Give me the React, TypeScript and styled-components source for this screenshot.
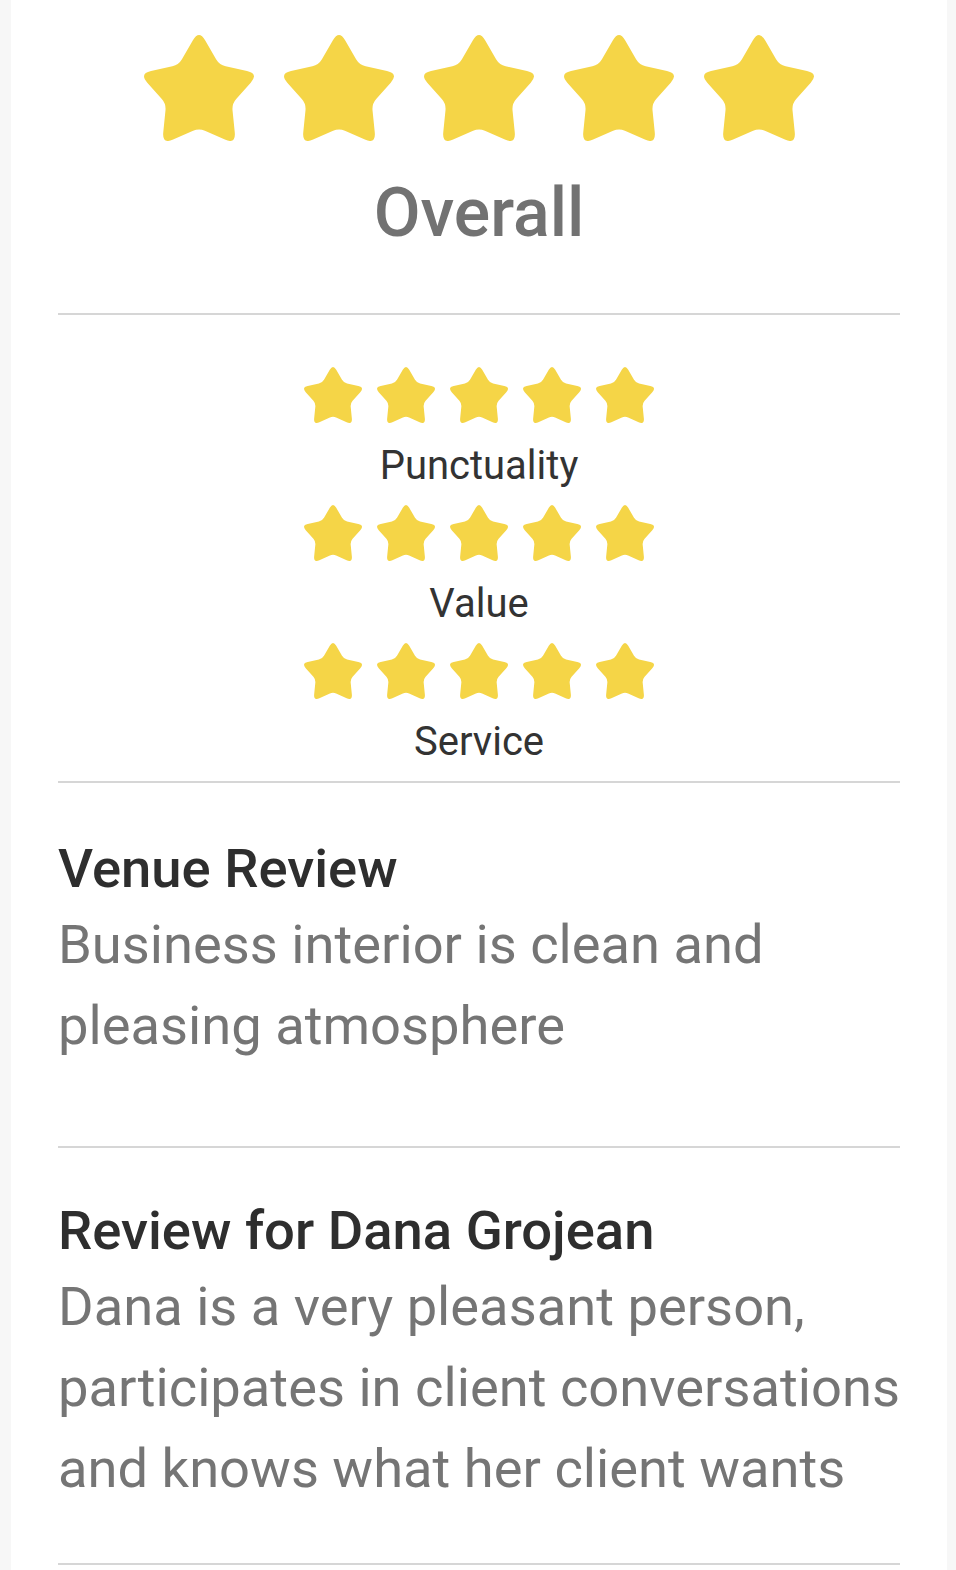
import React from 'react';
import styled, { createGlobalStyle } from 'styled-components';

const GlobalStyle = createGlobalStyle`
  html, body {
    margin: 0;
    padding: 0;
    background: #f7f7f7;
  }
  body {
    font-family: Roboto, "Liberation Sans", sans-serif;
    -webkit-font-smoothing: antialiased;
  }
`;

const Page = styled.div`
  margin: 0 9px 0 11px;
  background: #ffffff;
  padding: 0 47px;
  min-height: 1570px;
  box-sizing: border-box;
`;

const Section = styled.section<{ $pt: number; $pb: number }>`
  padding: ${(p) => p.$pt}px 0 ${(p) => p.$pb}px;
  border-bottom: 2px solid #d6d6d6;
`;

const CenterStack = styled.div`
  display: flex;
  flex-direction: column;
  align-items: center;
`;

const StarRow = styled.div<{ $gap: number }>`
  display: flex;
  gap: ${(p) => p.$gap}px;
`;

const OverallLabel = styled.div`
  margin-top: 32px;
  font-size: 68px;
  font-weight: 500;
  line-height: 80px;
  color: #727272;
`;

const CategoryLabel = styled.div`
  margin: 15px 0 11px;
  font-size: 40px;
  line-height: 56px;
  color: #333333;
`;

const ReviewTitle = styled.h2`
  margin: 0;
  font-size: 54.4px;
  font-weight: 500;
  line-height: 70px;
  color: #2e2e2e;
`;

const ReviewBody = styled.p`
  margin: 0;
  font-size: 54.3px;
  line-height: 81px;
  color: #757575;
`;

// rounded five-point star, built once
const buildStar = () => {
  const R = 50;
  const r = 27.5;
  const pts: [number, number][] = [];
  for (let i = 0; i < 10; i++) {
    const a = (-90 + i * 36) * (Math.PI / 180);
    const rad = i % 2 === 0 ? R : r;
    pts.push([50 + rad * Math.cos(a), 50 + rad * Math.sin(a)]);
  }
  const lerp = (a: [number, number], b: [number, number], t: number): [number, number] => [
    a[0] + (b[0] - a[0]) * t,
    a[1] + (b[1] - a[1]) * t,
  ];
  let d = '';
  const samples: [number, number][] = [];
  for (let i = 0; i < 10; i++) {
    const v = pts[i];
    const prev = pts[(i + 9) % 10];
    const next = pts[(i + 1) % 10];
    const t = i % 2 === 0 ? 0.3 : 0.16;
    const p0 = lerp(v, prev, t);
    const p2 = lerp(v, next, t);
    d += `${i === 0 ? 'M' : 'L'}${p0[0].toFixed(2)} ${p0[1].toFixed(2)} Q${v[0].toFixed(2)} ${v[1].toFixed(2)} ${p2[0].toFixed(2)} ${p2[1].toFixed(2)} `;
    for (let s = 0; s <= 10; s++) {
      const k = s / 10;
      const a = lerp(p0, v, k);
      const b = lerp(v, p2, k);
      samples.push(lerp(a, b, k));
    }
  }
  const xs = samples.map((p) => p[0]);
  const ys = samples.map((p) => p[1]);
  const minX = Math.min(...xs);
  const minY = Math.min(...ys);
  const box = `${minX.toFixed(2)} ${minY.toFixed(2)} ${(Math.max(...xs) - minX).toFixed(2)} ${(
    Math.max(...ys) - minY
  ).toFixed(2)}`;
  return { d: d + 'Z', box };
};

const STAR = buildStar();

const Star = ({ w, h }: { w: number; h: number }) => (
  <svg width={w} height={h} viewBox={STAR.box} preserveAspectRatio="none">
    <path d={STAR.d} fill="#f5d547" />
  </svg>
);

const Stars = ({ w, h, gap }: { w: number; h: number; gap: number }) => (
  <StarRow $gap={gap}>
    {[0, 1, 2, 3, 4].map((i) => (
      <Star key={i} w={w} h={h} />
    ))}
  </StarRow>
);

const categories = ['Punctuality', 'Value', 'Service'];

const reviews = [
  {
    title: 'Venue Review',
    body: ['Business interior is clean and', 'pleasing atmosphere'],
    pt: 51,
    pb: 80,
  },
  {
    title: 'Review for Dana Grojean',
    body: [
      'Dana is a very pleasant person,',
      'participates in client conversations',
      'and knows what her client wants',
    ],
    pt: 48,
    pb: 54,
  },
];

export default function App() {
  return (
    <>
      <GlobalStyle />
      <Page>
        <Section $pt={35} $pb={60}>
          <CenterStack>
            <Stars w={110} h={106} gap={30} />
            <OverallLabel>Overall</OverallLabel>
          </CenterStack>
        </Section>

        <Section $pt={52} $pb={0}>
          <CenterStack>
            {categories.map((c) => (
              <React.Fragment key={c}>
                <Stars w={58} h={56} gap={15} />
                <CategoryLabel>{c}</CategoryLabel>
              </React.Fragment>
            ))}
          </CenterStack>
        </Section>

        {reviews.map((r) => (
          <Section key={r.title} $pt={r.pt} $pb={r.pb}>
            <ReviewTitle>{r.title}</ReviewTitle>
            <ReviewBody>
              {r.body.map((line, i) => (
                <React.Fragment key={i}>
                  {line}
                  {i < r.body.length - 1 && <br />}
                </React.Fragment>
              ))}
            </ReviewBody>
          </Section>
        ))}
      </Page>
    </>
  );
}
